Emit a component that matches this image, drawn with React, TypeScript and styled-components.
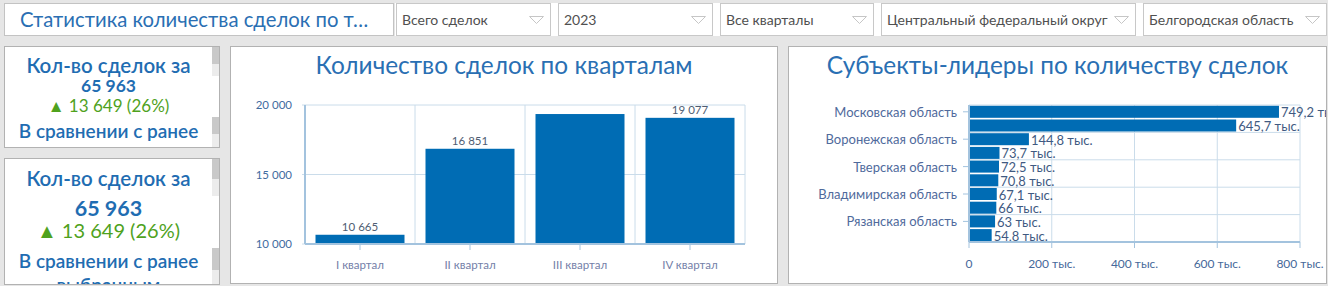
import React from "react";
import styled, { createGlobalStyle } from "styled-components";

const GlobalStyle = createGlobalStyle`
  html, body {
    margin: 0;
    padding: 0;
    background: #e6e6e6;
  }
  body {
    font-family: Lato, "Open Sans", "Liberation Sans", sans-serif;
    overflow: hidden;
  }
`;

const Page = styled.div`
  width: 1328px;
  height: 286px;
  overflow: hidden;
  background: #e6e6e6;
`;

// ---- header with title and filters ----

const Header = styled.header`
  display: flex;
  height: 33px;
  margin-top: 3px;
  padding-left: 4px;
`;

const TitleBox = styled.div`
  box-sizing: border-box;
  width: 390px;
  height: 33px;
  padding: 0 0 0 15px;
  background: #fff;
  border: 1px solid #c3c3c3;
  color: #2a6fb3;
  font-size: 20.3px;
  line-height: 31px;
  white-space: nowrap;
  overflow: hidden;
`;

const FilterStrip = styled.div`
  display: flex;
  gap: 7px;
  margin-left: 1px;
  padding-left: 1px;
  background: #fff;
`;

const Select = styled.div<{ $w: number }>`
  box-sizing: border-box;
  display: flex;
  align-items: center;
  justify-content: space-between;
  width: ${(p) => p.$w}px;
  height: 33px;
  padding: 0 6px 0 5px;
  border: 1px solid #c8c8c8;
  background: #fff;
  color: #505050;
  font-size: 14px;
  white-space: nowrap;
`;

function Chevron() {
  return (
    <svg width="15" height="8" viewBox="0 0 15 8">
      <path d="M0.5 0.5 H14.5 L7.5 7.5 Z" fill="none" stroke="#c6c6c6" strokeWidth="1" />
    </svg>
  );
}

// ---- main row ----

const Main = styled.main`
  display: flex;
  gap: 10px;
  margin-top: 10px;
  padding-left: 4px;
`;

const KpiColumn = styled.div`
  display: flex;
  flex-direction: column;
  gap: 10px;
  width: 216px;
`;

const KpiCard = styled.div<{ $h: number }>`
  box-sizing: border-box;
  display: flex;
  height: ${(p) => p.$h}px;
  background: #fff;
  border: 1px solid #b2b2b2;
  overflow: hidden;
`;

const KpiBody = styled.div<{ $top: number }>`
  flex: 1;
  padding-top: ${(p) => p.$top}px;
  text-align: center;
  color: #1f6db2;
  overflow: hidden;
`;

const KpiLine = styled.div<{ $size: number; $gap?: number; $weight?: number; $green?: boolean }>`
  margin-top: ${(p) => p.$gap ?? 0}px;
  font-size: ${(p) => p.$size}px;
  line-height: 24px;
  font-weight: ${(p) => p.$weight ?? 400};
  color: ${(p) => (p.$green ? "#4fa21d" : "inherit")};
  white-space: nowrap;
`;

const Scroll = styled.div`
  display: flex;
  flex-direction: column;
  width: 7px;
`;

const ScrollPart = styled.div<{ $h?: number; $tone: "dark" | "light" | "blank" }>`
  height: ${(p) => (p.$h ? `${p.$h}px` : "auto")};
  flex: ${(p) => (p.$h ? "none" : 1)};
  background: ${(p) =>
    p.$tone === "dark" ? "#c9c9c9" : p.$tone === "light" ? "#ececec" : "#fff"};
`;

const Panel = styled.section<{ $w: number }>`
  box-sizing: border-box;
  width: ${(p) => p.$w}px;
  height: 238px;
  background: #fff;
  border: 1px solid #b2b2b2;
  overflow: hidden;
`;

const PanelTitle = styled.h2`
  margin: 0;
  height: 48px;
  padding-top: 3px;
  box-sizing: border-box;
  font-size: 24.4px;
  line-height: 30px;
  font-weight: 400;
  color: #2a6fb3;
  text-align: center;
  white-space: nowrap;
`;

const ChartSvg = styled.svg`
  display: block;
  overflow: hidden;
`;

const SvgText = styled.text<{ $size: number; $fill: string }>`
  font-family: Lato, "Open Sans", "Liberation Sans", sans-serif;
  font-size: ${(p) => p.$size}px;
  fill: ${(p) => p.$fill};
`;

const BAR = "#006cb4";
const GRID = "#cadcea";
const AXIS = "#a3c3de";

const fmt = (n: number) => String(n).replace(/\B(?=(\d{3})+(?!\d))/g, " ");

const quarters = [
  { label: "I квартал", value: 10665, showValue: true },
  { label: "II квартал", value: 16851, showValue: true },
  { label: "III квартал", value: 19350, showValue: false },
  { label: "IV квартал", value: 19077, showValue: true },
];

function QuarterChart() {
  const left = 74;
  const right = 514;
  const top = 10;
  const bottom = 149;
  const band = (right - left) / quarters.length;
  const y = (v: number) => bottom - ((v - 10000) / 10000) * (bottom - top);
  const ticks = [20000, 15000, 10000];

  return (
    <ChartSvg width={546} height={188}>
      {ticks.map((t) => (
        <g key={t}>
          <line x1={left - 3} x2={right} y1={y(t)} y2={y(t)} stroke={GRID} />
          <SvgText $size={11.5} $fill="#3f6c9f" x={61} y={y(t) + 4} textAnchor="end">
            {fmt(t)}
          </SvgText>
        </g>
      ))}
      {quarters.map((q, i) => (
        <line
          key={q.label}
          x1={left + band * (i + 1)}
          x2={left + band * (i + 1)}
          y1={top}
          y2={bottom}
          stroke={GRID}
        />
      ))}
      {quarters.map((q, i) => {
        const cx = left + band * i + band / 2;
        const bt = y(q.value);
        return (
          <g key={q.label}>
            <rect x={cx - 44.5} y={bt} width={89} height={bottom - bt} fill={BAR} />
            {q.showValue && (
              <SvgText $size={11.5} $fill="#4f5d72" x={cx} y={bt - 4} textAnchor="middle">
                {fmt(q.value)}
              </SvgText>
            )}
            <line x1={cx} x2={cx} y1={bottom} y2={bottom + 6} stroke={AXIS} />
            <SvgText $size={11.5} $fill="#7480a8" x={cx} y={174} textAnchor="middle">
              {q.label}
            </SvgText>
          </g>
        );
      })}
      <line x1={left} x2={left} y1={top} y2={bottom} stroke={AXIS} strokeWidth={2} />
      <line x1={left} x2={right} y1={bottom} y2={bottom} stroke={AXIS} strokeWidth={2} />
    </ChartSvg>
  );
}

const leaders: { name: string | null; value: number; text: string }[] = [
  { name: "Московская область", value: 749.2, text: "749,2 тыс." },
  { name: null, value: 645.7, text: "645,7 тыс." },
  { name: "Воронежская область", value: 144.8, text: "144,8 тыс." },
  { name: null, value: 73.7, text: "73,7 тыс." },
  { name: "Тверская область", value: 72.5, text: "72,5 тыс." },
  { name: null, value: 70.8, text: "70,8 тыс." },
  { name: "Владимирская область", value: 67.1, text: "67,1 тыс." },
  { name: null, value: 66, text: "66 тыс." },
  { name: "Рязанская область", value: 63, text: "63 тыс." },
  { name: null, value: 54.8, text: "54,8 тыс." },
];

function LeadersChart() {
  const left = 180;
  const right = 511;
  const top = 10;
  const bottom = 147;
  const slot = (bottom - top) / leaders.length;
  const x = (v: number) => left + (v / 800) * (right - left);
  const xTicks = [0, 200, 400, 600, 800];

  return (
    <ChartSvg width={537} height={188}>
      {[0, 2, 4, 6, 8].map((i) => (
        <line key={i} x1={left} x2={right} y1={top + slot * i} y2={top + slot * i} stroke={GRID} />
      ))}
      {xTicks.slice(1).map((t) => (
        <line key={t} x1={x(t)} x2={x(t)} y1={top} y2={bottom} stroke={GRID} />
      ))}
      {leaders.map((d, i) => {
        const by = top + slot * i + 0.8;
        const cy = by + 6;
        return (
          <g key={d.text}>
            <rect x={left} y={by} width={x(d.value) - left} height={12} fill={BAR} />
            <SvgText $size={13} $fill="#3f5a82" x={x(d.value) + 2} y={cy + 5.5}>
              {d.text}
            </SvgText>
            {d.name && (
              <>
                <line x1={left - 6} x2={left} y1={cy} y2={cy} stroke={AXIS} />
                <SvgText $size={13} $fill="#4f6a9c" x={168} y={cy + 5} textAnchor="end">
                  {d.name}
                </SvgText>
              </>
            )}
          </g>
        );
      })}
      {xTicks.map((t) => (
        <g key={t}>
          <line x1={x(t)} x2={x(t)} y1={bottom} y2={bottom + 6} stroke={AXIS} />
          <SvgText $size={12} $fill="#46699a" x={x(t)} y={173} textAnchor="middle">
            {t === 0 ? "0" : `${t} тыс.`}
          </SvgText>
        </g>
      ))}
      <line x1={left} x2={left} y1={top} y2={bottom} stroke={AXIS} strokeWidth={2} />
      <line x1={left} x2={right} y1={bottom} y2={bottom} stroke={AXIS} strokeWidth={2} />
    </ChartSvg>
  );
}

const filters = [
  { label: "Всего сделок", w: 155 },
  { label: "2023", w: 155 },
  { label: "Все кварталы", w: 154 },
  { label: "Центральный федеральный округ", w: 255 },
  { label: "Белгородская область", w: 184 },
];

export default function App() {
  return (
    <Page>
      <GlobalStyle />
      <Header>
        <TitleBox>Статистика количества сделок по т…</TitleBox>
        <FilterStrip>
          {filters.map((f) => (
            <Select key={f.label} $w={f.w}>
              <span>{f.label}</span>
              <Chevron />
            </Select>
          ))}
        </FilterStrip>
      </Header>
      <Main>
        <KpiColumn>
          <KpiCard $h={102}>
            <KpiBody $top={6}>
              <KpiLine $size={20.5} $weight={600}>Кол-во сделок за</KpiLine>
              <KpiLine $size={17.5} $gap={-3} $weight={700}>65 963</KpiLine>
              <KpiLine $size={17} $gap={-4} $green>▲ 13 649 (26%)</KpiLine>
              <KpiLine $size={19} $gap={1} $weight={600}>В сравнении с ранее</KpiLine>
            </KpiBody>
            <Scroll>
              <ScrollPart $h={17} $tone="dark" />
              <ScrollPart $h={12} $tone="light" />
              <ScrollPart $tone="blank" />
              <ScrollPart $h={17} $tone="dark" />
              <ScrollPart $h={13} $tone="light" />
            </Scroll>
          </KpiCard>
          <KpiCard $h={127}>
            <KpiBody $top={7}>
              <KpiLine $size={20.5} $weight={600}>Кол-во сделок за</KpiLine>
              <KpiLine $size={21.5} $gap={6} $weight={700}>65 963</KpiLine>
              <KpiLine $size={20} $gap={-2} $green>▲ 13 649 (26%)</KpiLine>
              <KpiLine $size={19} $gap={7} $weight={600}>В сравнении с ранее</KpiLine>
              <KpiLine $size={19} $weight={600}>выбранным</KpiLine>
            </KpiBody>
            <Scroll>
              <ScrollPart $h={20} $tone="dark" />
              <ScrollPart $h={17} $tone="light" />
              <ScrollPart $tone="blank" />
              <ScrollPart $h={22} $tone="dark" />
              <ScrollPart $h={14} $tone="light" />
            </Scroll>
          </KpiCard>
        </KpiColumn>
        <Panel $w={548}>
          <PanelTitle>Количество сделок по кварталам</PanelTitle>
          <QuarterChart />
        </Panel>
        <Panel $w={539}>
          <PanelTitle>Субъекты-лидеры по количеству сделок</PanelTitle>
          <LeadersChart />
        </Panel>
      </Main>
    </Page>
  );
}
